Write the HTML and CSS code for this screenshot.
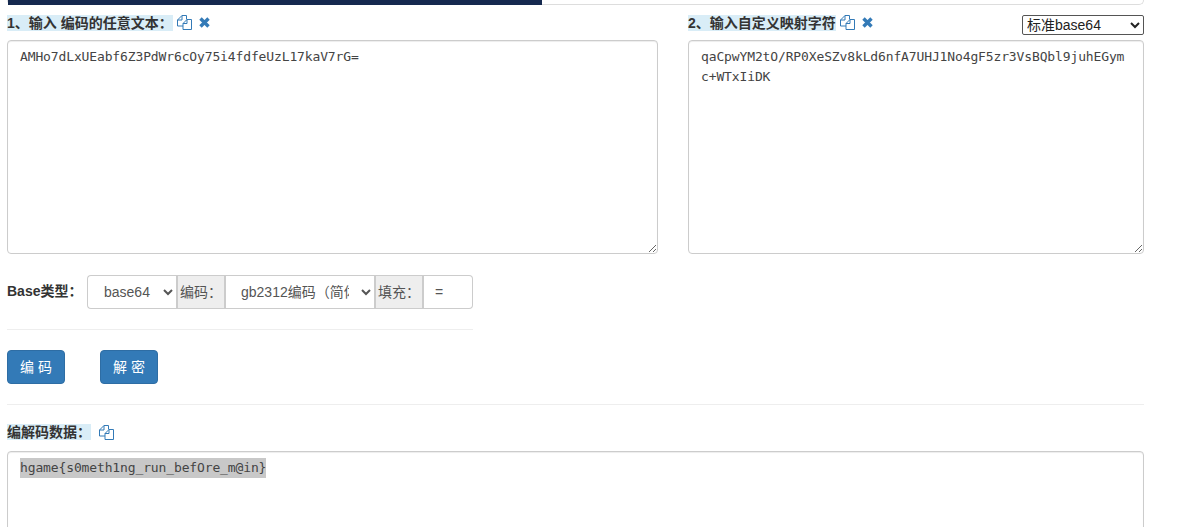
FILE: index.html
```html
<!DOCTYPE html>
<html lang="zh-CN">
<head>
    <meta charset="UTF-8">
    <meta name="viewport" content="width=device-width, initial-scale=1.0">
    <title>Base64 编码解码</title>
    <link rel="stylesheet" href="styles.css">
</head>
<body>

    <svg class="defs" width="0" height="0" aria-hidden="true">
        <symbol id="copy" viewBox="0 0 15 15">
            <path d="M9.500 4.500V.5H5L.5 5v6H6" fill="#fff" stroke="#337ab7"/>
            <path d="M5 .5V5H.5" fill="none" stroke="#337ab7"/>
            <path d="M10 4.500h4.500v10H6v-6z" fill="#fff" stroke="#337ab7"/>
            <path d="M10 4.500v4H6" fill="none" stroke="#337ab7"/>
        </symbol>
        <symbol id="close" viewBox="0 0 11 11">
            <path d="M1.500 1.500l8 8M9.500 1.500l-8 8" fill="none" stroke="#337ab7" stroke-width="3.400"/>
        </symbol>
    </svg>

    <div class="progress"><div class="progress-bar"></div></div>

    <div class="inputs">
        <div class="field field-text">
            <div class="field-head">
                <span class="label label-text">1、输入 编码的任意文本：</span>
                <svg class="icon icon-copy"><use href="#copy"/></svg>
                <svg class="icon icon-close"><use href="#close"/></svg>
            </div>
            <textarea class="box box-tall" spellcheck="false">AMHo7dLxUEabf6Z3PdWr6cOy75i4fdfeUzL17kaV7rG=</textarea>
        </div>
        <div class="field field-map">
            <div class="field-head">
                <span class="label">2、输入自定义映射字符</span>
                <svg class="icon icon-copy"><use href="#copy"/></svg>
                <svg class="icon icon-close"><use href="#close"/></svg>
                <select class="map-select">
                    <option>标准base64</option>
                </select>
            </div>
            <textarea class="box box-tall" spellcheck="false">qaCpwYM2tO/RP0XeSZv8kLd6nfA7UHJ1No4gF5zr3VsBQbl9juhEGymc+WTxIiDK</textarea>
        </div>
    </div>

    <div class="options">
        <div class="type-row">
            <strong class="type-label">Base类型：</strong>
            <div class="input-group">
                <select class="control control-base"><option>base64</option></select>
                <span class="addon">编码：</span>
                <select class="control control-charset"><option>gb2312编码（简体）</option></select>
                <span class="addon">填充：</span>
                <input class="control control-pad" type="text" value="=">
            </div>
        </div>
        <hr class="rule">
        <div class="actions">
            <button class="btn">编 码</button>
            <button class="btn">解 密</button>
        </div>
    </div>

    <hr class="rule rule-wide">

    <div class="field-head field-head-result">
        <span class="label label-result">编解码数据：</span>
        <svg class="icon icon-copy"><use href="#copy"/></svg>
    </div>
    <div class="box box-result"><span class="picked">hgame{s0meth1ng_run_befOre_m@in}</span></div>

</body>
</html>
```

FILE: styles.css
```css
html, body { height: 527px; overflow: hidden; }
body { margin: 0; padding: 0 42px 0 7px; background: #fff; color: #333; font-family: "Liberation Sans", "Noto Sans CJK SC", sans-serif; font-size: 14px; line-height: 20px; }
.defs { position: absolute; }

.progress { height: 5px; background: #fff; border: 1px solid #ddd; border-top: 0; border-radius: 0 0 6px 6px; box-sizing: border-box; }
.progress-bar { width: 534px; height: 5px; background: #15294f; }

.inputs { display: flex; gap: 30px; margin-top: 9px; }
.field-text { width: 651px; }
.field-map { width: 456px; }
.field-head { display: flex; align-items: center; height: 17px; margin-bottom: 9px; }
.label { background: #d9edf7; font-weight: bold; font-size: 14px; line-height: 16px; }
.label-text { width: 166px; white-space: nowrap; }
.icon { display: block; }
.icon-copy { width: 15px; height: 15px; margin-left: 4px; }
.icon-close { width: 11px; height: 11px; margin-left: 7px; }
.map-select { margin-left: auto; margin-top: 5px; width: 122px; height: 20px; padding: 0; background: #fff; border: 1px solid #555; border-radius: 2px; color: #222; font-family: "Liberation Sans", "Noto Sans CJK SC", sans-serif; font-size: 14px; }

.box { display: block; width: 100%; box-sizing: border-box; padding: 6px 12px; background: #fff; border: 1px solid #ccc; border-radius: 4px; box-shadow: inset 0 1px 1px rgba(0,0,0,.075); color: #444; font-family: "DejaVu Sans Mono", monospace; font-size: 13px; letter-spacing: -.13px; line-height: 20px; }
.box-tall { height: 214px; resize: vertical; outline: none; }
.box-result { margin-top: 2px; height: 120px; border-radius: 4px 4px 0 0; }
.picked { background: #c8c8c8; display: inline-block; }

.options { width: 466px; margin-top: 21px; }
.type-row { display: flex; align-items: center; }
.type-label { width: 80px; font-size: 14px; margin-top: -2px; white-space: nowrap; }
.input-group { display: flex; width: 386px; height: 34px; }
.control { box-sizing: border-box; height: 34px; padding: 6px 12px; background: #fff; border: 1px solid #ccc; color: #555; font-family: "Liberation Sans", "Noto Sans CJK SC", sans-serif; font-size: 14px; outline: none; }
.control-base { width: 89px; padding-right: 0; border-radius: 4px 0 0 4px; border-right: 0; }
.control-charset { width: 148px; padding-left: 11px; padding-right: 9px; border-left: 0; border-right: 0; }
.control-pad { width: 49px; padding-left: 11px; border-left: 0; border-radius: 0 4px 4px 0; }
.addon { box-sizing: border-box; width: 50px; padding: 6px 0 6px 2px; background: #eee; border: 1px solid #ccc; border-width: 1px 2px; color: #555; font-size: 14px; white-space: nowrap; }

.rule { height: 0; margin: 20px 0; border: 0; border-top: 1px solid #eee; }
.actions { display: flex; gap: 35px; }
.btn { width: 58px; height: 34px; padding: 5px 12px 7px; background: #337ab7; border: 1px solid #2e6da4; border-radius: 4px; color: #fff; font-family: "Liberation Sans", "Noto Sans CJK SC", sans-serif; font-size: 14px; }

.rule-wide { margin: 20px 0 0; }
.field-head-result { height: 16px; margin: 19px 0 11px; }
.label-result { width: 84px; white-space: nowrap; }
.label-result + .icon-copy { margin-left: 8px; }
```
